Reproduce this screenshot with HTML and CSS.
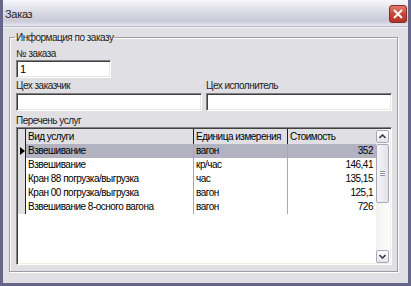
FILE: index.html
```html
<html>

<head>
    <title>Заказ</title>
    <link rel="stylesheet" href="styles.css">
</head>

<body>

    <div class="window">
        <div class="titlebar">
            <span class="title">Заказ</span>
            <span class="close">
                <svg width="10" height="10" viewBox="0 0 10 10">
                    <path d="M1 1 L9 9 M9 1 L1 9" stroke="#fff" stroke-width="2" />
                </svg>
            </span>
        </div>

        <div class="client">
            <fieldset class="group">
                <legend>Информация по заказу</legend>

                <div class="label first">№ заказа</div>
                <input class="edit short" type="text" value="1">

                <div class="pair">
                    <div>
                        <div class="label">Цех заказчик</div>
                        <input class="edit" type="text">
                    </div>
                    <div>
                        <div class="label">Цех исполнитель</div>
                        <input class="edit" type="text">
                    </div>
                </div>

                <div class="label list">Перечень услуг</div>
                <div class="grid">
                    <div class="table">
                        <div class="ind hd"></div>
                        <div class="hd">Вид услуги</div>
                        <div class="hd">Единица измерения</div>
                        <div class="hd">Стоимость</div>

                        <div class="ind"><span class="arrow"></span></div>
                        <div class="cell sel">Взвешивание</div>
                        <div class="cell sel">вагон</div>
                        <div class="cell sel num">352</div>

                        <div class="ind"></div>
                        <div class="cell">Взвешивание</div>
                        <div class="cell">кр/час</div>
                        <div class="cell num">146,41</div>

                        <div class="ind"></div>
                        <div class="cell">Кран 88 погрузка/выгрузка</div>
                        <div class="cell">час</div>
                        <div class="cell num">135,15</div>

                        <div class="ind"></div>
                        <div class="cell">Кран 00 погрузка/выгрузка</div>
                        <div class="cell">вагон</div>
                        <div class="cell num">125,1</div>

                        <div class="ind"></div>
                        <div class="cell">Взвешивание 8-осного вагона</div>
                        <div class="cell">вагон</div>
                        <div class="cell num">726</div>
                    </div>

                    <div class="scroll">
                        <div class="sbtn">
                            <svg width="7" height="5" viewBox="0 0 7 5"><path d="M0.5 4 L3.5 1 L6.5 4" stroke="#3c3c4c" stroke-width="1.6" fill="none" /></svg>
                        </div>
                        <div class="thumb"><span class="grip"></span></div>
                        <div class="track"></div>
                        <div class="sbtn">
                            <svg width="7" height="5" viewBox="0 0 7 5"><path d="M0.5 1 L3.5 4 L6.5 1" stroke="#3c3c4c" stroke-width="1.6" fill="none" /></svg>
                        </div>
                    </div>
                </div>
            </fieldset>
        </div>
    </div>

</body>

</html>
```

FILE: styles.css
```css
body {
    margin: 0;
    font-family: 'Liberation Sans', Arial, sans-serif;
    font-size: 10px;
    letter-spacing: -0.5px;
    color: #000;
    background: #e0dfe3;
}

.window {
    width: 411px;
    height: 286px;
    box-sizing: border-box;
    border: 3px solid #66668a;
    border-top: none;
    background: #e0dfe3;
    display: flex;
    flex-direction: column;
}

.titlebar {
    height: 26px;
    display: flex;
    align-items: center;
    justify-content: space-between;
    padding: 0 1px 0 2px;
    background: linear-gradient(#f6f6fa, #dedee8 40%, #cacad8 80%, #e6e6ee);
    border-bottom: 1px solid #b8b8c8;
}

.title {
    font-size: 11px;
    letter-spacing: -0.3px;
    color: #222;
    margin-top: 1px;
}

.close {
    width: 16px;
    height: 16px;
    border: 1px solid #8a2a22;
    border-radius: 3px;
    background: linear-gradient(#e07a6e, #c8463a 50%, #b03428);
    display: flex;
    align-items: center;
    justify-content: center;
    margin-top: 1px;
}

.client {
    flex: 1;
    padding: 3px 0 0 6px;
    border-top: 1px solid #f4f4f8;
}

.group {
    width: 389px;
    height: 241px;
    box-sizing: border-box;
    margin: 0;
    padding: 0 5px 0 6px;
    border: 1px solid #9c9ca6;
    box-shadow: 1px 1px 0 #fff, inset 1px 1px 0 #fff;
    min-width: 0;
}

.group legend {
    padding: 0 1px;
    margin-left: -1px;
    line-height: 13px;
    color: #202020;
}

.label {
    line-height: 13px;
    margin-top: 1px;
    color: #202020;
}

.label.first {
    margin-top: 3px;
}

.label.list {
    margin-top: 3px;
}

.edit {
    display: block;
    width: 100%;
    height: 18px;
    box-sizing: border-box;
    margin: 1px 0 0 0;
    padding: 0 3px;
    font-family: 'Liberation Sans', Arial, sans-serif;
    font-size: 11px;
    border: 1px solid;
    border-color: #808080 #ffffff #ffffff #808080;
    box-shadow: inset 1px 1px 0 #404040, inset -1px -1px 0 #e8e8e0;
    background: #fff;
    outline: none;
}

.short {
    width: 95px;
    margin-top: 0;
}

.pair {
    display: grid;
    grid-template-columns: 186px 186px;
    gap: 4px;
}

.grid {
    height: 138px;
    box-sizing: border-box;
    margin-top: 0;
    display: flex;
    border: 1px solid;
    border-color: #808080 #ffffff #ffffff #808080;
    box-shadow: inset 1px 1px 0 #404040, inset -1px -1px 0 #eeeee2;
    background: #fff;
    padding: 1px;
}

.table {
    flex: 1;
    display: grid;
    grid-template-columns: 8px 168px 94px 1fr;
    grid-template-rows: 15px repeat(5, 14px);
    align-content: start;
}

.hd {
    background: #e0dfe3;
    border-right: 1px solid #202020;
    padding-left: 2px;
    line-height: 15px;
    white-space: nowrap;
    overflow: hidden;
}

.table > .hd:nth-child(4) {
    border-right: none;
}

.ind {
    background: #e0dfe3;
    border-right: 1px solid #202020;
    padding: 0;
    position: relative;
}

.arrow {
    position: absolute;
    left: 2px;
    top: 3px;
    border-left: 5px solid #000;
    border-top: 4px solid transparent;
    border-bottom: 4px solid transparent;
}

.cell {
    line-height: 14px;
    padding-left: 2px;
    border-right: 1px solid #a8a8a8;
    white-space: nowrap;
    overflow: hidden;
}

.num {
    text-align: right;
    padding-right: 3px;
    border-right: none;
}

.sel {
    background: #b2b2c0;
}

.scroll {
    width: 14px;
    display: flex;
    flex-direction: column;
    background: linear-gradient(90deg, #f2f2f0, #fdfdfd);
}

.sbtn {
    height: 13px;
    margin: 1px 1px 0 0;
    box-sizing: border-box;
    border: 1px solid #a8a8b8;
    border-radius: 2px;
    background: linear-gradient(#ffffff, #e4e4ec);
    display: flex;
    align-items: center;
    justify-content: center;
}

.thumb {
    height: 59px;
    margin: 1px 1px 0 0;
    box-sizing: border-box;
    border: 1px solid #a8a8b8;
    border-radius: 2px;
    background: linear-gradient(90deg, #f4f4f8, #e2e2ea);
    display: flex;
    align-items: center;
    justify-content: center;
}

.grip {
    width: 5px;
    height: 5px;
    border-top: 1px solid #9090a0;
    border-bottom: 1px solid #9090a0;
    box-sizing: border-box;
    background: linear-gradient(#fff 40%, #9090a0 40%, #9090a0 60%, #fff 60%);
}

.track {
    flex: 1;
}
```
